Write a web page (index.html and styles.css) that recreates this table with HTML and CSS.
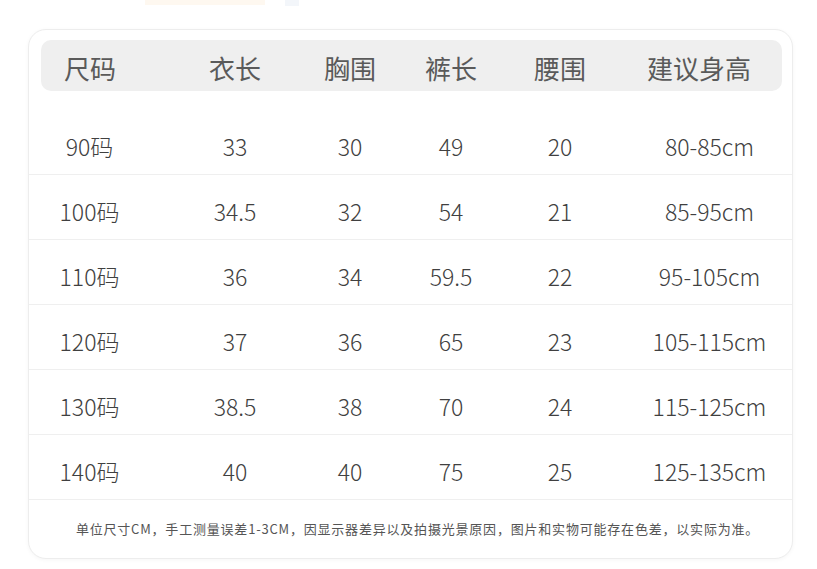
FILE: index.html
```html
<!DOCTYPE html>
<html lang="zh-CN">
<head>
<meta charset="utf-8">
<title>尺码表</title>
<link rel="stylesheet" href="styles.css">
</head>
<body>
<div class="topstrip"><span class="deco-orange"></span><span class="deco-blue"></span></div>
<div class="card">
  <div class="head">
    <div class="c1">尺码</div>
    <div>衣长</div>
    <div>胸围</div>
    <div>裤长</div>
    <div>腰围</div>
    <div class="c6">建议身高</div>
  </div>
  <div class="rows">
    <div class="row"><div>90码</div><div>33</div><div>30</div><div>49</div><div>20</div><div class="c6">80-85cm</div></div>
    <div class="row"><div>100码</div><div>34.5</div><div>32</div><div>54</div><div>21</div><div class="c6">85-95cm</div></div>
    <div class="row"><div>110码</div><div>36</div><div>34</div><div>59.5</div><div>22</div><div class="c6">95-105cm</div></div>
    <div class="row"><div>120码</div><div>37</div><div>36</div><div>65</div><div>23</div><div class="c6">105-115cm</div></div>
    <div class="row"><div>130码</div><div>38.5</div><div>38</div><div>70</div><div>24</div><div class="c6">115-125cm</div></div>
    <div class="row"><div>140码</div><div>40</div><div>40</div><div>75</div><div>25</div><div class="c6">125-135cm</div></div>
  </div>
  <div class="note">单位尺寸CM，手工测量误差1-3CM，因显示器差异以及拍摄光景原因，图片和实物可能存在色差，以实际为准。</div>
</div>
</body>
</html>
```

FILE: styles.css
```css
html, body {
  margin: 0;
  padding: 0;
  background: #ffffff;
}

body {
  font-family: "Noto Sans CJK SC", "Noto Sans", sans-serif;
  color: #444;
  width: 817px;
  height: 569px;
  overflow: hidden;
}

.topstrip {
  height: 6px;
  display: flex;
  align-items: flex-start;
  padding-left: 145px;
  gap: 20px;
}

.deco-orange {
  width: 120px;
  height: 5px;
  background: #fef8f0;
}

.deco-blue {
  width: 14px;
  height: 6px;
  background: #f3f6fa;
}

.card {
  margin: 23px 24px 0 28px;
  height: 528px;
  border: 1px solid #ededed;
  border-radius: 18px;
  box-shadow: 0 1px 4px rgba(0, 0, 0, 0.04);
  background: #fff;
  display: flex;
  flex-direction: column;
}

.head {
  margin: 10px 10px 0 12px;
  height: 51px;
  border-radius: 10px;
  background: #efefef;
  display: grid;
  grid-template-columns: 109px 170px 60px 142px 76px 1fr;
  align-items: center;
  font-size: 26px;
  font-weight: 400;
  color: #5a5a5a;
  padding-top: 4px;
  box-sizing: border-box;
}

.head > div {
  text-align: center;
  white-space: nowrap;
}

.head .c1 {
  padding-right: 11px;
}

.head .c6 {
  padding-left: 18px;
}

.rows {
  margin-top: 19px;
}

.row {
  height: 65px;
  box-sizing: border-box;
  padding-top: 7px;
  border-bottom: 1px solid #efefef;
  display: grid;
  grid-template-columns: 121px 170px 60px 142px 76px 1fr;
  align-items: center;
  font-size: 23px;
  font-weight: 300;
  color: #404040;
}

.row > div {
  text-align: center;
  white-space: nowrap;
}

.row .c6 {
  padding-left: 29px;
}

.note {
  flex: 1;
  display: flex;
  align-items: center;
  justify-content: center;
  font-size: 13px;
  letter-spacing: 0.8px;
  color: #555;
  padding: 0 0 2px 14px;
}
```
